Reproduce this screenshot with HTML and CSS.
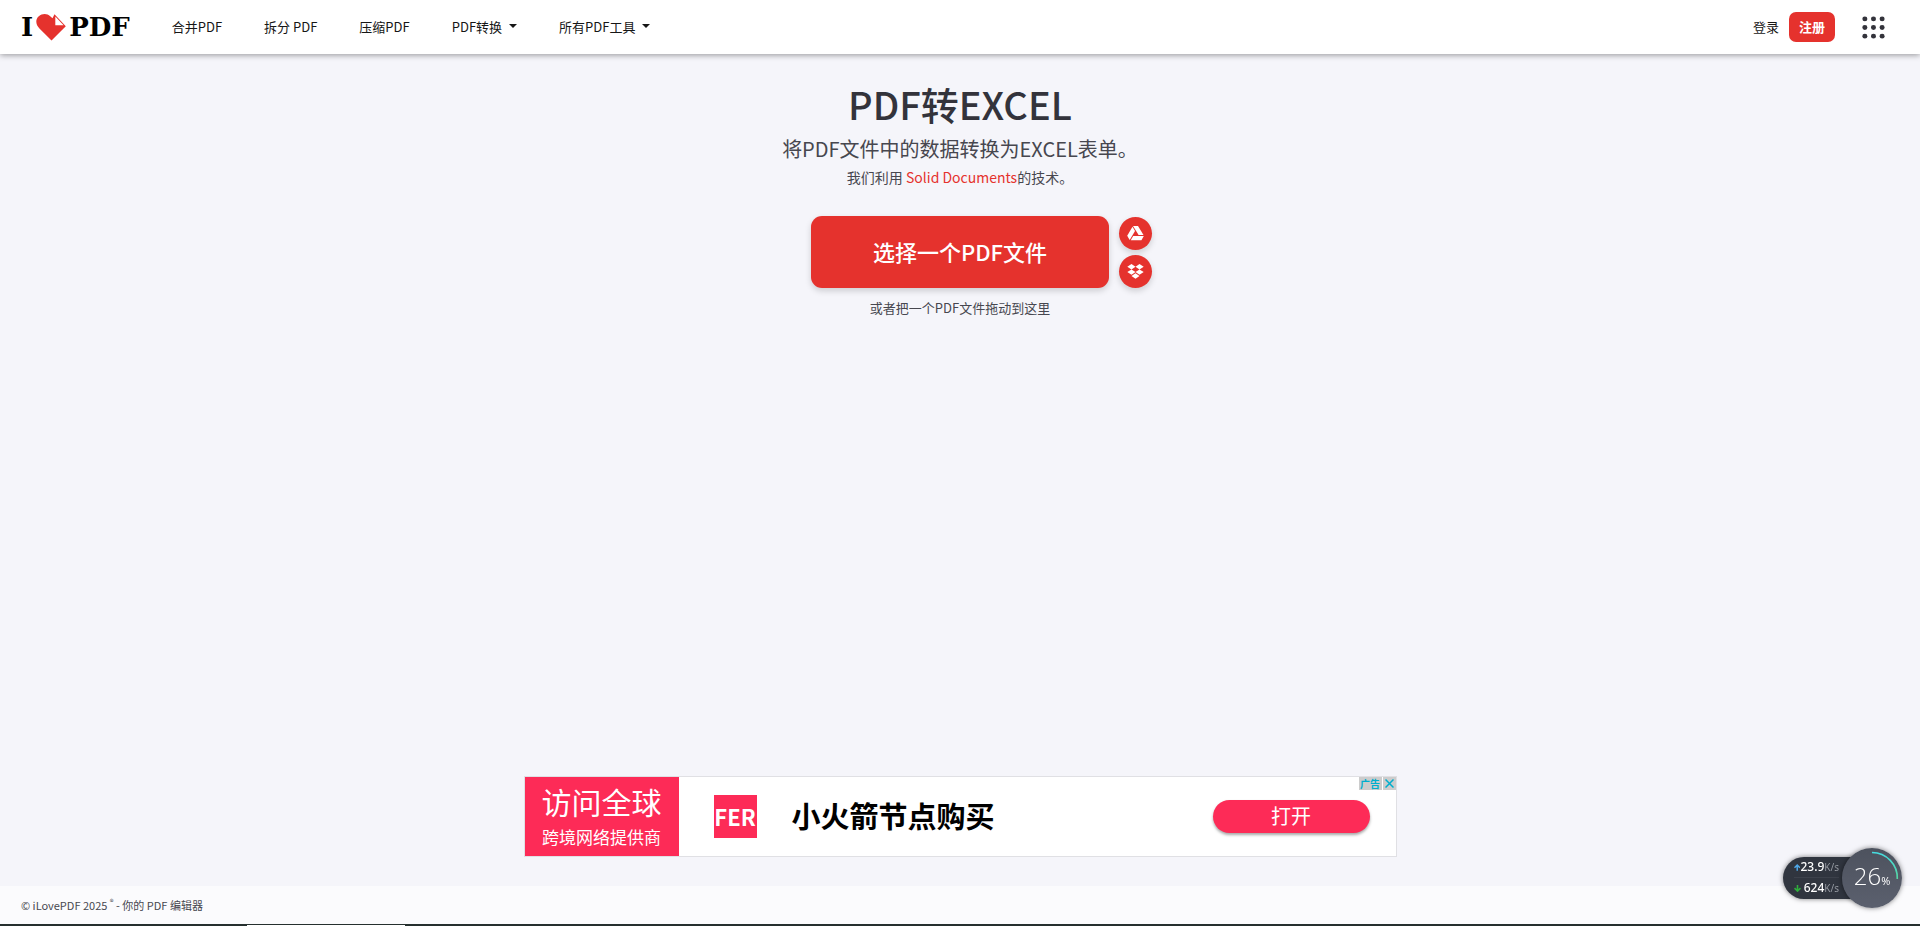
FILE: index.html
```
<!DOCTYPE html>
<html lang="zh-CN">
<head>
    <meta charset="UTF-8">
    <meta name="viewport" content="width=device-width, initial-scale=1.0">
    <title>PDF转EXCEL</title>
    <link rel="stylesheet" href="styles.css">
</head>
<body>
    <header class="header">
        <a class="logo" href="#">
            <span>I</span>
            <svg class="logo-heart" width="30" height="27" viewBox="0 0 30 27">
                <path fill="#e5322d" d="M15.5 26.5 3.2 14.2C-.6 10.300-.6 5 2.800 2.200 6.200-.700 11.200-.600 14.200 2.200L16.500 4.200 18.500.300 29.800 12.300Z"/>
                <path fill="#fff" d="M19.300 2.600V11.200H27.600Z"/>
            </svg>
            <span>PDF</span>
        </a>
        <nav class="nav">
            <a href="#">合并PDF</a>
            <a href="#">拆分 PDF</a>
            <a href="#">压缩PDF</a>
            <a href="#">PDF转换<i class="caret"></i></a>
            <a href="#">所有PDF工具<i class="caret"></i></a>
        </nav>
        <div class="account">
            <a class="login" href="#">登录</a>
            <a class="register" href="#">注册</a>
            <button class="apps" type="button" aria-label="菜单">
                <svg width="23" height="23" viewBox="0 0 24 24" fill="#33333b">
                    <circle cx="3" cy="3" r="2.600"/><circle cx="12" cy="3" r="2.600"/><circle cx="21" cy="3" r="2.600"/>
                    <circle cx="3" cy="12" r="2.600"/><circle cx="12" cy="12" r="2.600"/><circle cx="21" cy="12" r="2.600"/>
                    <circle cx="3" cy="21" r="2.600"/><circle cx="12" cy="21" r="2.600"/><circle cx="21" cy="21" r="2.600"/>
                </svg>
            </button>
        </div>
    </header>

    <main class="main">
        <h1>PDF转EXCEL</h1>
        <h2>将PDF文件中的数据转换为EXCEL表单。</h2>
        <p class="tech">我们利用 <a href="#">Solid Documents</a>的技术。</p>

        <div class="uploader">
            <button class="pick" type="button">选择一个PDF文件</button>
            <div class="sources">
                <button class="source" type="button" aria-label="Google Drive">
                    <svg width="17" height="15" viewBox="0 0 17 15" fill="#fff">
                        <path d="M6 0H11L16.500 9H11.600Z"/>
                        <path d="M5.500.700 8 5 2.700 14 .200 9.700Z"/>
                        <path d="M6.200 10H16.800L14.400 14.300H3.700Z"/>
                    </svg>
                </button>
                <button class="source" type="button" aria-label="Dropbox">
                    <svg width="17" height="15" viewBox="0 0 17 15" fill="#fff">
                        <path d="M4.500 0 8.500 2.700 4.500 5.400.300 2.700ZM12.500 0 16.700 2.700 12.500 5.400 8.500 2.700ZM4.500 5.400 8.500 8.100 4.500 10.800.300 8.100ZM12.500 5.400 16.700 8.100 12.500 10.800 8.500 8.100ZM8.500 9.300 12.500 12 8.500 14.700 4.500 12Z"/>
                    </svg>
                </button>
            </div>
        </div>
        <p class="hint">或者把一个PDF文件拖动到这里</p>

        <section class="ad">
            <div class="ad-side">
                <span class="ad-big">访问全球</span>
                <span class="ad-small">跨境网络提供商</span>
            </div>
            <div class="ad-brand">FER</div>
            <strong class="ad-title">小火箭节点购买</strong>
            <a class="ad-open" href="#">打开</a>
            <div class="ad-info">
                <span>广告</span>
                <button type="button" aria-label="关闭">
                    <svg width="9" height="9" viewBox="0 0 9 9"><path stroke="#00aecd" stroke-width="1.500" d="M.500.500 8.500 8.500M8.500.500.500 8.500"/></svg>
                </button>
            </div>
        </section>
    </main>

    <footer class="footer">© iLovePDF 2025 <sup>®</sup> - 你的 PDF 编辑器</footer>
    <div class="strip"></div>

    <div class="monitor">
        <div class="speeds">
            <div class="speed">
                <svg width="7" height="7" viewBox="0 0 7 7" fill="none" stroke="#4fa8e8" stroke-width="1.600"><path d="M3.500 7V1M.500 3.800 3.500.900 6.500 3.800"/></svg>
                <b>23.9</b><span>K/s</span>
            </div>
            <div class="speed">
                <svg width="7" height="7" viewBox="0 0 7 7" fill="none" stroke="#2fae3c" stroke-width="1.600"><path d="M3.500 0V6M.500 3.200 3.500 6.100 6.500 3.200"/></svg>
                <b>624</b><span>K/s</span>
            </div>
        </div>
        <div class="gauge">
            <svg class="gauge-arc" viewBox="0 0 60 60" fill="none">
                <defs>
                    <linearGradient id="arc" x1="0" y1="0" x2="0" y2="1">
                        <stop offset="0" stop-color="#45dce0"/>
                        <stop offset="1" stop-color="#57d5a0"/>
                    </linearGradient>
                </defs>
                <path stroke="url(#arc)" stroke-width="1.600" d="M30 4.500A25.500 25.500 0 0 1 55.300 31"/>
            </svg>
            <span class="gauge-value">26</span><span class="gauge-unit">%</span>
        </div>
    </div>
</body>
</html>
```
FILE: styles.css
```
* {
    box-sizing: border-box;
}
body {
    margin: 0;
    min-height: 100vh;
    display: flex;
    flex-direction: column;
    font-family: "Noto Sans CJK SC", sans-serif;
    font-size: 13px;
    color: #161616;
    background: #f5f5fa;
}
a {
    color: inherit;
    text-decoration: none;
}
button {
    font-family: inherit;
    border: 0;
    padding: 0;
    cursor: pointer;
}
svg {
    display: block;
}

/* header */
.header {
    height: 54px;
    display: flex;
    align-items: center;
    padding: 0 35px 0 21px;
    background: #fff;
    box-shadow: 0 1px 6px rgba(0, 0, 0, 0.4);
}
.logo {
    display: flex;
    align-items: center;
    gap: 3px;
    font-family: "DejaVu Serif", serif;
    font-size: 26px;
    font-weight: bold;
    line-height: 30px;
    color: #000;
}
.nav {
    display: flex;
    gap: 42px;
    margin-left: 42px;
    padding-bottom: 2px;
}
.nav a {
    display: flex;
    align-items: center;
    white-space: pre;
}
.caret {
    margin-left: 7px;
    border: 4px solid transparent;
    border-top-color: #161616;
    border-bottom: 0;
}
.account {
    margin-left: auto;
    display: flex;
    align-items: center;
}
.login {
    padding-bottom: 2px;
}
.register {
    margin: 0 27px 0 10px;
    padding: 0 10px;
    line-height: 30px;
    font-weight: bold;
    color: #fff;
    background: #e5322d;
    border-radius: 7px;
}
.apps {
    background: none;
}

/* tool */
.main {
    flex: 1;
    display: flex;
    flex-direction: column;
    align-items: center;
    padding: 24px 0 29px;
    text-align: center;
    color: #47474f;
}
h1, h2, p {
    margin: 0;
}
h1 {
    font-size: 38px;
    line-height: 52px;
    font-weight: 500;
    color: #33333b;
}
h2 {
    margin-top: 3px;
    font-size: 20px;
    line-height: 32px;
    font-weight: 400;
}
.tech {
    font-size: 14px;
    line-height: 24px;
}
.tech a {
    color: #e5322d;
}
.uploader {
    display: grid;
    grid-template-columns: 1fr auto 1fr;
    gap: 10px;
    align-items: end;
    margin-top: 27px;
}
.pick {
    grid-column: 2;
    padding: 0 62px 2px;
    font-size: 22px;
    line-height: 70px;
    font-weight: 500;
    color: #fff;
    background: #e5322d;
    border-radius: 11px;
    box-shadow: 0 3px 6px rgba(0, 0, 0, 0.16);
}
.sources {
    display: grid;
    gap: 5px;
}
.source {
    width: 33px;
    height: 33px;
    display: grid;
    place-items: center;
    background: #e5322d;
    border-radius: 50%;
    box-shadow: 0 3px 6px rgba(0, 0, 0, 0.16);
}
.hint {
    margin-top: 10px;
    line-height: 20px;
}

/* banner */
.ad {
    position: relative;
    display: flex;
    align-items: center;
    width: 100%;
    max-width: 873px;
    margin-top: auto;
    background: #fff;
    border: 1px solid #e0e0e4;
    color: #000;
}
.ad-side {
    width: 154px;
    height: 79px;
    display: flex;
    flex-direction: column;
    align-items: center;
    color: #fff;
    background: #fd2b57;
}
.ad-big {
    font-size: 30px;
    line-height: 48px;
}
.ad-small {
    font-size: 17px;
    line-height: 24px;
}
.ad-brand {
    width: 43px;
    margin-left: 35px;
    font-size: 22px;
    font-weight: bold;
    line-height: 43px;
    color: #fff;
    background: #fd2b57;
}
.ad-title {
    margin-left: 35px;
    padding-bottom: 4px;
    font-size: 29px;
    line-height: 40px;
}
.ad-open {
    width: 157px;
    margin-left: auto;
    margin-right: 26px;
    padding-bottom: 2px;
    font-size: 20px;
    line-height: 31px;
    color: #fff;
    background: #fd2b57;
    border-radius: 17px;
    box-shadow: 0 2px 3px rgba(0, 0, 0, 0.35);
}
.ad-info {
    position: absolute;
    top: 0;
    right: 0;
    display: flex;
    gap: 1px;
    font-size: 10px;
    line-height: 13px;
    font-weight: bold;
    color: #00aecd;
}
.ad-info span {
    width: 23px;
    background: #ccc;
}
.ad-info button {
    width: 13px;
    display: grid;
    place-items: center;
    background: #ccc;
}

/* footer */
.footer {
    height: 38px;
    padding: 0 21px;
    font-size: 11px;
    line-height: 38px;
    color: #47474f;
    background: #fbfbfd;
}
.footer sup {
    font-size: 8px;
    line-height: 1;
}
.strip {
    height: 2px;
    background: linear-gradient(#fff, #fff) 14% 1px / 158px 1px no-repeat #26302f;
}

/* floating network meter */
.monitor {
    position: fixed;
    right: 18px;
    bottom: 18px;
    display: flex;
    align-items: center;
}
.speeds {
    width: 79px;
    height: 42px;
    margin-right: -20px;
    padding-left: 11px;
    border-radius: 21px 0 0 21px;
    background: #30353f;
    box-shadow: 0 0 5px rgba(0, 0, 0, 0.5);
}
.speed {
    display: flex;
    align-items: center;
    width: 45px;
    font-family: "Noto Sans", sans-serif;
    font-size: 12px;
    line-height: 20px;
}
.speed + .speed {
    border-top: 1px solid #3c414b;
}
.speed b {
    margin-left: auto;
    font-weight: 500;
    color: #fff;
}
.speed span {
    font-size: 10px;
    color: #9498a0;
}
.gauge {
    position: relative;
    width: 60px;
    height: 60px;
    display: flex;
    align-items: baseline;
    justify-content: center;
    border-radius: 50%;
    font-family: "Open Sans", sans-serif;
    line-height: 56px;
    color: #fff;
    background: linear-gradient(#4d525e, #5b606e);
    box-shadow: 0 0 5px rgba(0, 0, 0, 0.5);
}
.gauge-arc {
    position: absolute;
    inset: 0;
}
.gauge-value {
    font-size: 24px;
    font-weight: 300;
}
.gauge-unit {
    font-size: 11px;
}
```
